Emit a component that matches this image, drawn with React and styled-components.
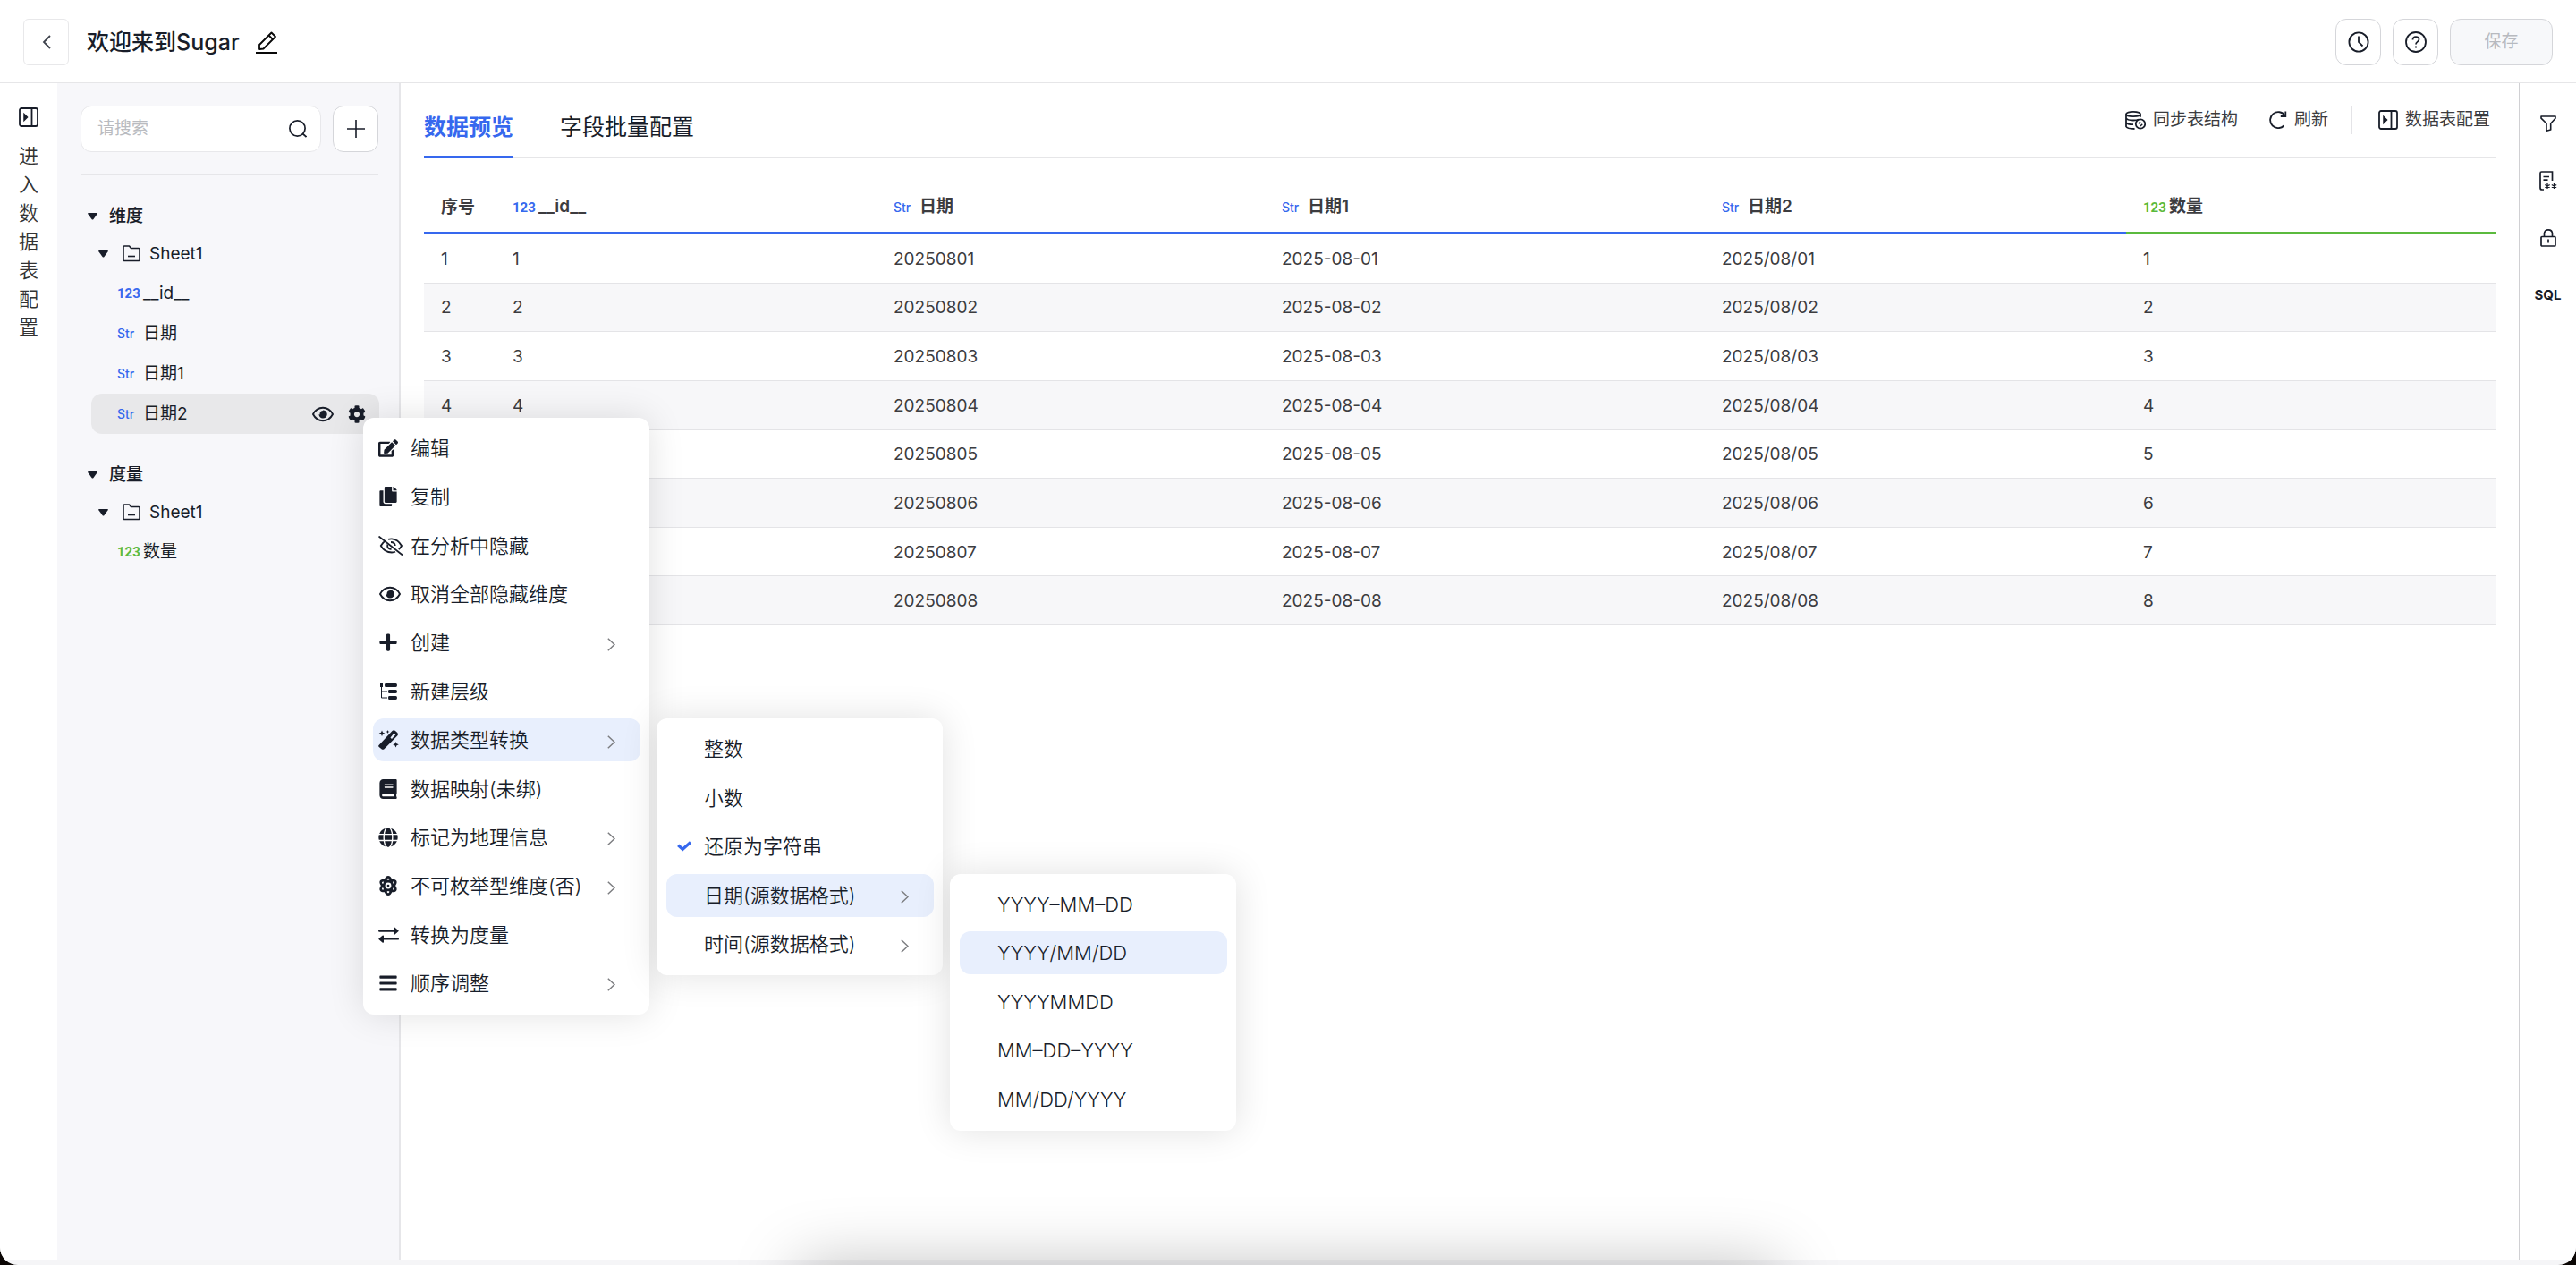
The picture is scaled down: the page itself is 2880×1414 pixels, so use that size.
import React from 'react';
import styled, { createGlobalStyle, css } from 'styled-components';
import { FaEdit, FaCopy, FaPlus, FaBook, FaGlobe, FaAtom, FaBars, FaCog } from 'react-icons/fa';

const BLUE = '#3668ee';
const GREEN = '#5bba3e';
const INK = '#181d29';

const GlobalStyle = createGlobalStyle`
  * {
    box-sizing: border-box;
  }
  html {
    background: #0b0604;
  }
  body {
    margin: 0;
    color: ${INK};
    font-family: Inter, "Noto Sans CJK SC", sans-serif;
    font-size: 19px;
    line-height: 28px;
  }
  button, input {
    font: inherit;
    color: inherit;
  }
  button {
    padding: 0;
    border: 0;
    background: none;
    cursor: pointer;
  }
  h1, ul {
    margin: 0;
    padding: 0;
    list-style: none;
  }
  svg {
    display: block;
    flex: none;
  }
`

const Page = styled.div`
  position: relative;
  display: flex;
  flex-direction: column;
  min-height: 100vh;
  padding-bottom: 6px;
  overflow: hidden;
  border-radius: 0 0 20px 20px;
  background: #f5f5f7;
`

// Soft shadow rising from below the window
const DockShadow = styled.div`
  position: absolute;
  top: 100%;
  left: 31%;
  width: 38%;
  height: 100px;
  box-shadow: 0 0 72px rgba(0, 0, 0, 0.25);
`

const Header = styled.header`
  display: flex;
  align-items: center;
  justify-content: space-between;
  height: 93px;
  padding: 2px 26px 0;
  border-bottom: 1px solid #e6e6e8;
  background: #fff;
`

const HeaderGroup = styled.div`
  display: flex;
  align-items: center;
  gap: ${(props) => props.gap}px;
`

const Title = styled.h1`
  font-size: 25px;
  line-height: 36px;
  font-weight: 500;
  margin-right: -2px;
`

const IconButton = styled.button`
  display: flex;
  flex: none;
  align-items: center;
  justify-content: center;
  width: 51px;
  height: 52px;
  border: 1px solid ${(props) => props.$light ? '#e8e8ea' : '#d5d6da'};
  border-radius: ${(props) => props.$light ? '6px' : '12px'};
  background: #fff;
`

const SaveButton = styled.button`
  width: 115px;
  height: 52px;
  border: 1px solid #d5d6da;
  border-radius: 12px;
  background: #f7f8fa;
  color: #b8babf;
`

const Body = styled.div`
  display: flex;
  flex: 1;
  background: #fff;
`

const LeftRail = styled.aside`
  width: 64px;
  padding-top: 27px;
`

const EnterConfig = styled.button`
  display: flex;
  flex-direction: column;
  align-items: center;
  width: 100%;
  gap: 16px;
  color: #333;
  font-size: 22px;
  font-weight: 350;
  line-height: 32px;

  span {
    width: 22px;
  }
`

const Sidebar = styled.aside`
  width: 384px;
  padding: 25px 23px 0 26px;
  border-right: 2px solid #e6e6e9;
  background: #f7f7fa;
`

const SearchRow = styled.div`
  display: flex;
  gap: 13px;
  padding-bottom: 25px;
  border-bottom: 1px solid #e6e6e9;
`

const SearchBox = styled.label`
  display: flex;
  flex: 1;
  align-items: center;
  min-width: 0;
  height: 52px;
  padding: 0 15px 0 18px;
  border: 1px solid #e8e8eb;
  border-radius: 12px;
  background: #fff;
`

const SearchInput = styled.input`
  flex: 1;
  min-width: 0;
  padding: 0;
  border: 0;
  outline: 0;
  background: none;

  &::placeholder {
    color: #b9bbc0;
    opacity: 1;
  }
`

const Group = styled.section`
  padding-top: 26px;
`

const GroupTitle = styled.button`
  display: flex;
  align-items: center;
  gap: 13px;
  height: 40px;
  padding-left: 8px;
  font-weight: 500;
`

const SheetRow = styled.button`
  display: flex;
  align-items: center;
  height: 43px;
  padding-left: 20px;

  svg + svg {
    margin: 0 10px 0 16px;
  }
`

const Field = styled.li`
  display: flex;
  align-items: center;
  height: 45px;
  margin: 0 -1px 0 12px;
  padding: 0 15px 0 29px;
  border-radius: 12px;
  background: ${(props) => props.$active ? '#e8e8ea' : 'none'};
`

const FieldActions = styled.div`
  display: flex;
  gap: 16px;
  margin-left: auto;
`

const Tag = styled.span`
  display: inline-block;
  width: 29px;
  color: ${(props) => props.$green ? GREEN : BLUE};
  text-align: left;

  ${(props) => props.$number ? css`
    font-family: Roboto, sans-serif;
    font-size: 15px;
    font-weight: 700;
  ` : css`
    font-size: 14px;
    font-weight: 500;
  `}
`

const Main = styled.main`
  flex: 1;
  min-width: 0;
  padding: 0 26px;
`

const TabBar = styled.div`
  display: flex;
  justify-content: space-between;
  height: 84px;
  border-bottom: 1px solid #e6e6e8;
`

const Tabs = styled.nav`
  display: flex;
  gap: 52px;
`

const Tab = styled.button`
  height: 84px;
  padding-top: 16px;
  border-bottom: 3px solid ${(props) => props.$active ? BLUE : 'transparent'};
  color: ${(props) => props.$active ? BLUE : INK};
  font-size: 25px;
  font-weight: ${(props) => props.$active ? 600 : 400};
`

const Tools = styled.div`
  display: flex;
  align-items: center;
  height: 32px;
  margin-top: 25px;
  padding-right: 6px;
`

const Tool = styled.button`
  display: flex;
  align-items: center;
  gap: 8px;
  margin-left: ${(props) => props.$far ? '29px' : '35px'};
  color: #3c3c3f;
`

const ToolDivider = styled.span`
  width: 1px;
  height: 32px;
  margin-left: 26px;
  background: #e4e4e7;
`

const Table = styled.table`
  width: 100%;
  height: 498px;
  margin-top: 24px;
  table-layout: fixed;
  border-collapse: separate;
  border-spacing: 0;
  color: #3c3c3f;
  text-align: left;
`

const Th = styled.th`
  height: 61px;
  padding: 3px 19px 0;
  border-bottom: 3px solid ${(props) => props.$green ? GREEN : BLUE};
  font-weight: 600;
`

const Td = styled.td`
  padding: 2px 19px 0;
  border-bottom: 1px solid #e4e4e7;
  background: ${(props) => props.$even ? '#f7f7f9' : '#fff'};
`

const RightRail = styled.aside`
  display: flex;
  flex-direction: column;
  align-items: center;
  gap: 36px;
  width: 64px;
  padding-top: 31px;
  border-left: 1px solid #d0d0d3;
`

const RailButton = styled.button`
  display: flex;
  align-items: center;
  justify-content: center;
  height: 28px;
  font-size: 15px;
  font-weight: 700;
`

const menuPanel = css`
  position: absolute;
  z-index: 1;
  display: flex;
  flex-direction: column;
  justify-content: space-between;
  width: 320px;
  padding: 10px 10px 11px 11px;
  border-radius: 12px;
  background: #fff;
  box-shadow: 0 0 40px rgba(0, 0, 0, 0.12);
`

const Menu = styled.ul`
  ${menuPanel}
  top: 467px;
  left: 406px;
  min-height: 667px;
`

const SubMenu = styled.ul`
  ${menuPanel}
  top: 0;
  left: 317px;
  min-height: 287px;
`

const MenuItem = styled.li`
  position: relative;
`

const MenuButton = styled.button`
  display: flex;
  align-items: center;
  width: 100%;
  height: 48px;
  padding: 0 28px 0 0;
  border-radius: 12px;
  background: ${(props) => props.$active ? '#e8effd' : 'none'};
  font-size: 22px;
  font-weight: 350;
  line-height: 32px;
  text-align: left;
`

const MenuIcon = styled.span`
  width: 42px;
  padding-left: ${(props) => props.$check ? '12px' : '6px'};
`

const MenuArrow = styled.span`
  margin-left: auto;
  padding-top: 4px;
`

const fa = { width: 'auto', height: 22 };

const PanelIcon = () => (
  <svg width="22" height="22" viewBox="0 0 22 22" fill="none" stroke={INK} strokeWidth="1.8">
    <rect x="1" y="1" width="20" height="20" rx="2" />
    <path d="M14.5 1v20" />
    <path d="M6 7.5v7l3.5-3.5z" fill={INK} strokeWidth="1.5" />
  </svg>
)

const BackIcon = () => (
  <svg width="10" height="16" viewBox="0 0 10 16" fill="none" stroke="#3d414b" strokeWidth="1.8">
    <path d="M9 1 2 8l7 7" />
  </svg>
)

const PencilIcon = () => (
  <svg width="24" height="25" viewBox="0 0 24 25" fill="none" stroke="#090909" strokeWidth="1.8" strokeLinejoin="round">
    <path d="M4 20v-5L17.5 1.5l4.500 4.500L8.500 19.500z" />
    <path d="M14.500 4.500l4.500 4.500" />
    <path d="M0 24h24" strokeWidth="2" />
  </svg>
)

const ClockIcon = () => (
  <svg width="24" height="24" viewBox="0 0 24 24" fill="none" stroke={INK} strokeWidth="1.8">
    <circle cx="12" cy="12" r="10.600" />
    <path d="M12 5.500V12l4.500 4.500" />
  </svg>
)

const HelpIcon = () => (
  <svg width="24" height="24" viewBox="0 0 24 24" fill="none" stroke={INK} strokeWidth="1.8">
    <circle cx="12" cy="12" r="11" />
    <path d="M8.500 9.500c0-4.500 7-4.500 7-.5 0 2.800-3.500 2.500-3.500 5.500" />
    <path d="M12 16.500v2" />
  </svg>
)

const SearchIcon = () => (
  <svg width="20" height="20" viewBox="0 0 20 20" fill="none" stroke={INK} strokeWidth="1.7">
    <circle cx="9.500" cy="9.500" r="8.600" />
    <path d="M15.500 15.500l4 3.500" />
  </svg>
)

const AddIcon = () => (
  <svg width="20" height="20" viewBox="0 0 20 20" stroke={INK} strokeWidth="1.6">
    <path d="M10 0v20M0 10h20" />
  </svg>
)

const CaretIcon = () => (
  <svg width="11" height="8" viewBox="0 0 11 8" fill={INK}>
    <path d="M1 0h9q1.500 0 .6 1.300L6.500 7q-1 1.200-2 0L.4 1.300Q-.5 0 1 0z" />
  </svg>
)

const FolderIcon = () => (
  <svg width="20" height="19" viewBox="0 0 20 19" fill="none" stroke={INK} strokeWidth="1.6" strokeLinejoin="round">
    <path d="M1 1.800q0-.8.8-.8h5.700l2 2.500h8.700q.8 0 .8.800v12.400q0 .8-.8.800H1.800q-.8 0-.8-.8z" />
    <path d="M6 12.500h8" />
  </svg>
)

const EyeIcon = ({ w = 24 }) => (
  <svg width={w} height="18" viewBox="0 0 24 18" fill="none" stroke={INK} strokeWidth="1.900">
    <path d="M1 9C6-.6 18-.6 23 9 18 18.600 6 18.600 1 9z" />
    <path d="M12 4.500a4.500 4.500 0 1 1-4.500 4.500c1.500 1.300 4.500 0 4.500-4.500z" fill={INK} stroke="none" />
    <circle cx="12.500" cy="9" r="4" fill={INK} stroke="none" />
  </svg>
)

const EyeOffIcon = () => (
  <svg width="28" height="22" viewBox="0 0 28 22" fill="none" stroke={INK} strokeWidth="1.800">
    <path d="M.5.500l26.500 21" />
    <path d="M8 5.500Q4.500 7.500 2.800 11 7 18.500 15 18.500q2.500 0 4-.7" />
    <path d="M11 3.800q2-.6 4-.5 7 .5 11 7.700-1.300 2.500-3.200 4.200" />
    <path d="M10.300 9.500q-1 5 4.200 5.500M14 7q4.300 0 4.800 4" />
  </svg>
)

const TreeIcon = () => (
  <svg width="22" height="18" viewBox="0 0 22 18" fill={INK}>
    <path d="M2 0h3v4H2zM8 0h11.500q1.500 0 1.500 2t-1.500 2H8q-1 0-1-2t1-2zM12 7h7.500q1.500 0 1.500 2t-1.500 2H12q-1 0-1-2t1-2zM12 14h7.500q1.500 0 1.500 2t-1.500 2H12q-1 0-1-2t1-2z" />
    <path d="M3.500 4v12H10M3.500 9H10" fill="none" stroke={INK} />
  </svg>
)

const WandIcon = () => (
  <svg width="23" height="22" viewBox="0 0 23 22" fill={INK}>
    <path d="M.8 16.800L15.500 1q1.800-1.700 3.800.2l1.700 1.600q1.800 2 .2 3.800L6.500 21.200q-1.500 1.300-3 0L.8 19q-1.300-1 0-2.200zM13.500 8.500l1.500 1.500 4.300-4.700L17.500 3.500z" fillRule="evenodd" />
    <path d="M4 .5l1 2.300 2.300 1L5 4.800l-1 2.300-1-2.300-2.300-1 2.300-1zM10.500 0l.6 1.400 1.400.6-1.400.6-.6 1.400-.6-1.400L8.500 2l1.400-.6zM19.500 13l1 2.300 2.300 1-2.300 1-1 2.300-1-2.300-2.300-1 2.300-1z" />
  </svg>
)

const SwapIcon = () => (
  <svg width="23" height="18" viewBox="0 0 23 18" fill={INK}>
    <path d="M1.200 3.300H17V1.500q0-1.800 1.500-.8L22.300 4q.8.600 0 1.200L18.500 8.500Q17 9.500 17 7.700V5.700H1.200q-1.200 0-1.200-1.200t1.200-1.200zM21.800 12.200H6v-1.700q0-1.700-1.500-.7L.7 13q-.8.600 0 1.200l3.800 3.200q1.500 1 1.500-.7v-2.100h15.800q1.200 0 1.200-1.200t-1.200-1.200z" />
  </svg>
)

const CheckIcon = () => (
  <svg width="16" height="12" viewBox="0 0 16 12" fill="none" stroke={BLUE} strokeWidth="3.200">
    <path d="M1.200 4.800l5 4.500L15 1.500" />
  </svg>
)

const ArrowIcon = () => (
  <svg width="9" height="15" viewBox="0 0 9 15" fill="none" stroke="#7c7d80" strokeWidth="1.500">
    <path d="M.8.800L8 7.500.8 14.200" />
  </svg>
)

const SyncIcon = () => (
  <svg width="23" height="21" viewBox="0 0 23 21" fill="none" stroke={INK} strokeWidth="1.800">
    <ellipse cx="9" cy="3.500" rx="8" ry="2.600" />
    <path d="M1 3.500v14q1 2.500 9.500 2.500M17 3.500v3.200M1 8q1 2.500 8 2.500 4 0 6-1M1 12.800q1 2.300 8 2.300" />
    <circle cx="17" cy="14.500" r="5.200" />
    <path d="M14.800 14.200l2.200-2.200M17 17l2.200-2.200" strokeWidth="1.500" />
  </svg>
)

const RefreshIcon = () => (
  <svg width="20" height="20" viewBox="0 0 20 20" fill="none" stroke={INK} strokeWidth="1.800">
    <path d="M16.500 16.500A9 9 0 1 1 17.500 5" />
    <path d="M18.300.5V6h-5.500" />
  </svg>
)

const FilterIcon = () => (
  <svg width="18" height="18" viewBox="0 0 18 18" fill="none" stroke={INK} strokeWidth="1.600" strokeLinejoin="round">
    <path d="M1 1h16v2.200L11.700 9v7L7 17.200V9L1 3.200z" />
  </svg>
)

const MaskIcon = () => (
  <svg width="20" height="22" viewBox="0 0 20 22" fill="none" stroke={INK} strokeWidth="1.700">
    <path d="M5 21H3q-2 0-2-2V2.500Q1 1 2.500 1h12v10" />
    <path d="M4.500 6.500h6.500M4.500 10.200h5" />
    <path d="M9 14v6M6.300 15.500l5.400 3M11.700 15.500l-5.400 3M16.500 14v6M13.800 15.500l5.400 3M19.200 15.500l-5.400 3" strokeWidth="1.300" />
  </svg>
)

const LockIcon = () => (
  <svg width="18" height="20" viewBox="0 0 18 20" fill="none" stroke={INK} strokeWidth="1.700">
    <rect x="1" y="8.500" width="16" height="10.500" rx="1" />
    <path d="M4.500 8.500V5.500q0-4.600 4.500-4.600t4.500 4.600v3M9 11.500v4" />
  </svg>
)

const columns = [
  { title: '序号', width: 80 },
  { title: '__id__', tag: '123', width: 426 },
  { title: '日期', tag: 'Str', width: 434 },
  { title: '日期1', tag: 'Str', width: 492 },
  { title: '日期2', tag: 'Str', width: 471 },
  { title: '数量', tag: '123', green: true, width: 413 },
];

const rows = [1, 2, 3, 4, 5, 6, 7, 8].map((n) => [
  n, n, `2025080${n}`, `2025-08-0${n}`, `2025/08/0${n}`, n,
]);

const dateFormats = [
  { label: 'YYYY–MM–DD' },
  { label: 'YYYY/MM/DD', active: true },
  { label: 'YYYYMMDD' },
  { label: 'MM–DD–YYYY' },
  { label: 'MM/DD/YYYY' },
];

const typeItems = [
  { label: '整数' },
  { label: '小数' },
  { label: '还原为字符串', checked: true },
  { label: '日期(源数据格式)', arrow: true, active: true, children: dateFormats },
  { label: '时间(源数据格式)', arrow: true },
];

const menuItems = [
  { label: '编辑', icon: <FaEdit {...fa} /> },
  { label: '复制', icon: <FaCopy {...fa} /> },
  { label: '在分析中隐藏', icon: <EyeOffIcon /> },
  { label: '取消全部隐藏维度', icon: <EyeIcon w={26} /> },
  { label: '创建', icon: <FaPlus {...fa} />, arrow: true },
  { label: '新建层级', icon: <TreeIcon /> },
  { label: '数据类型转换', icon: <WandIcon />, arrow: true, active: true, children: typeItems },
  { label: '数据映射(未绑)', icon: <FaBook {...fa} /> },
  { label: '标记为地理信息', icon: <FaGlobe {...fa} />, arrow: true },
  { label: '不可枚举型维度(否)', icon: <FaAtom {...fa} />, arrow: true },
  { label: '转换为度量', icon: <SwapIcon /> },
  { label: '顺序调整', icon: <FaBars {...fa} />, arrow: true },
];

const TypeTag = ({ type, green }) => (
  <Tag $number={type === '123'} $green={green}>{type}</Tag>
)

const MenuEntry = ({ item }) => (
  <MenuItem>
    <MenuButton $active={item.active}>
      <MenuIcon $check={item.checked}>{item.checked ? <CheckIcon /> : item.icon}</MenuIcon>
      {item.label}
      {item.arrow && <MenuArrow><ArrowIcon /></MenuArrow>}
    </MenuButton>
    {item.children && (
      <SubMenu>
        {item.children.map((child) => <MenuEntry key={child.label} item={child} />)}
      </SubMenu>
    )}
  </MenuItem>
)

const FieldGroup = ({ title, children }) => (
  <Group>
    <GroupTitle><CaretIcon />{title}</GroupTitle>
    <SheetRow><CaretIcon /><FolderIcon />Sheet1</SheetRow>
    <ul>{children}</ul>
  </Group>
)

const App = () => {
  return (
    <Page>
      <GlobalStyle />
      <Header>
        <HeaderGroup gap={20}>
          <IconButton $light aria-label="返回"><BackIcon /></IconButton>
          <Title>欢迎来到Sugar</Title>
          <button aria-label="重命名"><PencilIcon /></button>
        </HeaderGroup>
        <HeaderGroup gap={13}>
          <IconButton aria-label="历史"><ClockIcon /></IconButton>
          <IconButton aria-label="帮助"><HelpIcon /></IconButton>
          <SaveButton disabled>保存</SaveButton>
        </HeaderGroup>
      </Header>

      <Body>
        <LeftRail>
          <EnterConfig>
            <PanelIcon />
            <span>进入数据表配置</span>
          </EnterConfig>
        </LeftRail>

        <Sidebar>
          <SearchRow>
            <SearchBox>
              <SearchInput type="text" placeholder="请搜索" aria-label="请搜索" />
              <SearchIcon />
            </SearchBox>
            <IconButton aria-label="新增"><AddIcon /></IconButton>
          </SearchRow>
          <FieldGroup title="维度">
            <Field><TypeTag type="123" />__id__</Field>
            <Field><TypeTag type="Str" />日期</Field>
            <Field><TypeTag type="Str" />日期1</Field>
            <Field $active>
              <TypeTag type="Str" />日期2
              <FieldActions>
                <button aria-label="隐藏"><EyeIcon /></button>
                <button aria-label="设置"><FaCog size={20} /></button>
              </FieldActions>
            </Field>
          </FieldGroup>
          <FieldGroup title="度量">
            <Field><TypeTag type="123" green />数量</Field>
          </FieldGroup>
        </Sidebar>

        <Main>
          <TabBar>
            <Tabs>
              <Tab $active>数据预览</Tab>
              <Tab>字段批量配置</Tab>
            </Tabs>
            <Tools>
              <Tool><SyncIcon />同步表结构</Tool>
              <Tool><RefreshIcon />刷新</Tool>
              <ToolDivider />
              <Tool $far><PanelIcon />数据表配置</Tool>
            </Tools>
          </TabBar>
          <Table>
            <colgroup>
              {columns.map((col) => <col key={col.title} width={col.width} />)}
            </colgroup>
            <thead>
              <tr>
                {columns.map((col) => (
                  <Th key={col.title} $green={col.green}>
                    {col.tag && <TypeTag type={col.tag} green={col.green} />}
                    {col.title}
                  </Th>
                ))}
              </tr>
            </thead>
            <tbody>
              {rows.map((row, i) => (
                <tr key={row[0]}>
                  {row.map((cell, j) => <Td key={j} $even={i % 2 === 1}>{cell}</Td>)}
                </tr>
              ))}
            </tbody>
          </Table>
        </Main>

        <RightRail>
          <RailButton aria-label="筛选"><FilterIcon /></RailButton>
          <RailButton aria-label="脱敏"><MaskIcon /></RailButton>
          <RailButton aria-label="权限"><LockIcon /></RailButton>
          <RailButton>SQL</RailButton>
        </RightRail>
      </Body>

      <Menu>
        {menuItems.map((item) => <MenuEntry key={item.label} item={item} />)}
      </Menu>
      <DockShadow />
    </Page>
  );
}

export default App;
